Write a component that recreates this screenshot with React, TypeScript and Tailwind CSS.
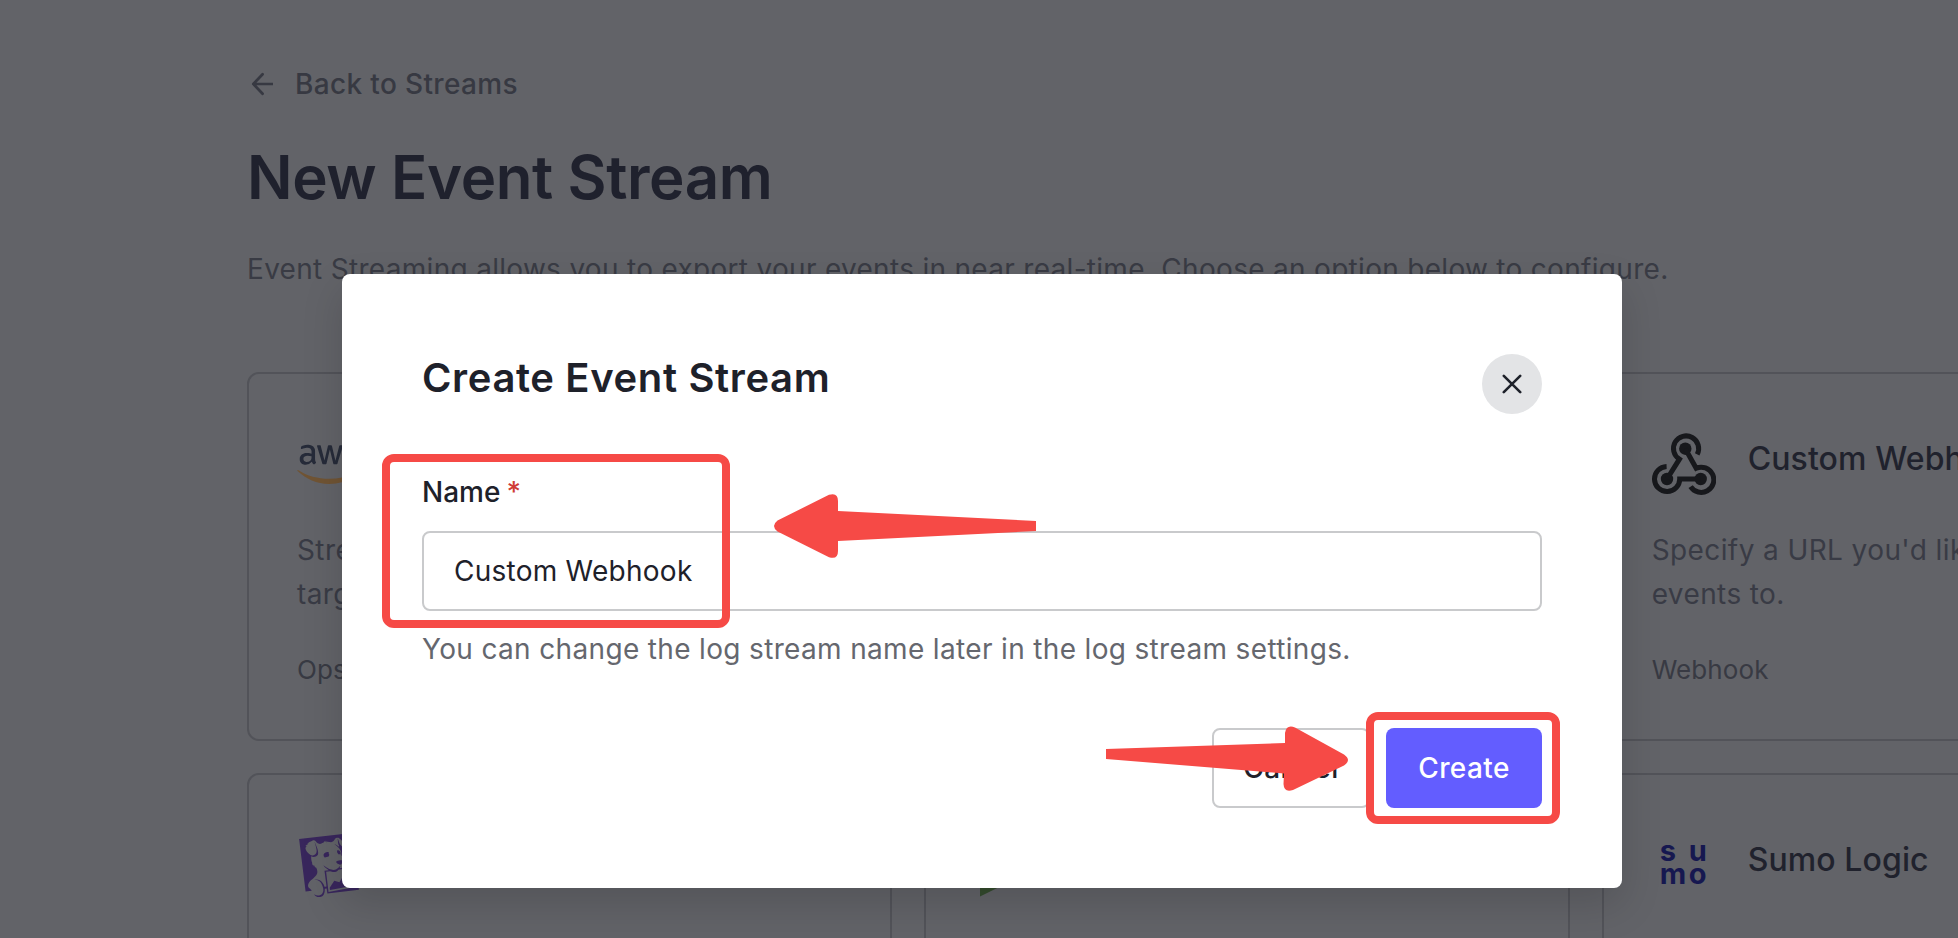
import type { ReactNode } from "react";
import { FaAws } from "react-icons/fa";
import { SiDatadog } from "react-icons/si";

function WebhookLogo() {
  return (
    <svg viewBox="0 0 64 64" className="h-16 w-16 shrink-0" fill="none" stroke="#17181c" strokeWidth="5">
      <circle cx="33.3" cy="16.7" r="6.2" fill="#17181c" stroke="none" />
      <circle cx="15" cy="47" r="6.2" fill="#17181c" stroke="none" />
      <circle cx="48.7" cy="47" r="6.2" fill="#17181c" stroke="none" />
      <path d="M33.3 16.7 44.2 36.2A12.6 12.6 0 1 1 38.600 54.600" />
      <path d="M48.7 47H27.7A12.6 12.6 0 1 1 14.6 34.4" />
      <path d="M15 47 27.4 27.2A12.6 12.6 0 1 1 45.2 22.4" />
    </svg>
  );
}

function AwsLogo() {
  return (
    <span className="grid h-16 w-16 shrink-0 place-items-center">
      <FaAws className="col-start-1 row-start-1 h-16 w-16 text-[#262b39] [clip-path:inset(0_0_48%_0)]" />
      <svg viewBox="0 0 64 64" className="col-start-1 row-start-1 h-16 w-16" fill="#705434">
        <path d="M0 38.500C9 47 20 52 32 52c9 0 19-3 26-8l-1-2C50 45 41 46.800 32 46.800 21 46.800 10 44 1 38z" />
      </svg>
    </span>
  );
}

function SumoLogo() {
  return (
    <span className="grid h-16 w-16 shrink-0 grid-cols-[29px_20px] grid-rows-[23px_23px] content-center pb-[6px] pl-2 text-[29px] leading-[23px] font-bold text-[#161850]">
      <span>s</span>
      <span>u</span>
      <span>m</span>
      <span>o</span>
    </span>
  );
}

function SplunkLogo() {
  return (
    <svg viewBox="0 0 64 64" className="h-16 w-16 shrink-0" fill="#344b2e">
      <path d="M6 0 60 25v12L6 63.5V50L45 31 6 13z" />
    </svg>
  );
}

type CardProps = { logo?: ReactNode; title?: string; lines?: string[]; tag?: string };

function StreamCard({ logo, title, lines = [], tag }: CardProps) {
  return (
    <article className="h-[369px] rounded-xl border-2 border-[#525359] px-12 pt-[58px]">
      <div className="flex h-16 gap-8">
        {logo}
        <h2 className="text-[32px] leading-[54px] font-medium tracking-[0.1px] whitespace-nowrap text-[#20222d]">{title}</h2>
      </div>
      <p className="mt-8 h-[88px] text-[28px] leading-[44px] tracking-[0.4px] whitespace-nowrap text-[#393b45]">
        {lines.map((line) => (
          <span key={line} className="block">
            {line}
          </span>
        ))}
      </p>
      <p className="mt-[34px] text-[26px] leading-10 tracking-[0.1px] text-[#383a43]">{tag}</p>
    </article>
  );
}

export default function App() {
  return (
    <div className="relative h-[938px] w-[1958px] overflow-hidden bg-[#626368] font-['Inter',sans-serif]">
      <main className="flex flex-col pt-[62px] pl-[247px]">
        <a className="flex h-11 items-center gap-[22px] text-[28px] font-medium tracking-[0.35px] text-[#373942]">
          <svg viewBox="0 0 26 26" className="h-[26px] w-[26px]" fill="none" stroke="currentColor" strokeWidth="2.7" strokeLinecap="round" strokeLinejoin="round">
            <path d="M25.500 13H6.300M15.600 3.200 6.300 13l9.300 9.800" />
          </svg>
          Back to Streams
        </a>
        <h1 className="mt-[35px] text-[60px] leading-[72px] font-semibold tracking-[-0.4px] text-[#1f212d]">New Event Stream</h1>
        <p className="mt-[34px] h-11 text-[28px] leading-[44px] tracking-[0.3px] whitespace-nowrap text-[#393b44]">
          Event Streaming allows you to export your events in near real-time. Choose an option below to configure.
        </p>
        <div className="mt-[81px] grid w-[2000px] grid-cols-3 gap-8">
          <StreamCard logo={<AwsLogo />} lines={["Stream", "targets"]} tag="Ops" />
          <StreamCard />
          <StreamCard logo={<WebhookLogo />} title="Custom Webhook" lines={["Specify a URL you'd like", "events to."]} tag="Webhook" />
          <StreamCard logo={<SiDatadog className="h-16 w-16 shrink-0 text-[#38265c]" />} />
          <StreamCard logo={<SplunkLogo />} />
          <StreamCard logo={<SumoLogo />} title="Sumo Logic" />
        </div>
      </main>

      <div className="absolute inset-0 pt-[274px] pl-[342px]">
        <section className="flex h-[614px] w-[1280px] flex-col rounded-lg bg-white px-20 pt-20 shadow-[0_16px_40px_rgba(0,0,0,0.15)]">
          <header className="flex justify-between">
            <h2 className="text-[40px] leading-[48px] font-semibold tracking-[0.63px] text-[#1e212a]">Create Event Stream</h2>
            <button className="grid h-[60px] w-[60px] place-items-center rounded-full bg-[#e3e4e6]">
              <svg viewBox="0 0 20 20" className="h-5 w-5" fill="none" stroke="#1e212a" strokeWidth="2.6" strokeLinecap="round">
                <path d="m1.800 1.800 16.400 16.400M18.200 1.800 1.800 18.200" />
              </svg>
            </button>
          </header>
          <label className="mt-14 flex h-11 gap-[6px] text-[28px] leading-[44px] font-medium text-[#1e212a]">
            Name<span className="text-[#d03c38]">*</span>
          </label>
          <div className="mt-[17px] flex h-20 shrink-0 items-center rounded-lg border-2 border-[#c9cacc] px-[30px] text-[28px] tracking-[0.25px] text-[#1e212a]">
            Custom Webhook
          </div>
          <p className="mt-4 text-[28px] leading-[44px] tracking-[0.34px] text-[#65676e]">
            You can change the log stream name later in the log stream settings.
          </p>
          <footer className="mt-[57px] flex justify-end gap-4 text-[28px] font-medium tracking-[0.4px]">
            <button className="h-20 w-[158px] rounded-lg border-2 border-[#c9cacc] text-[#1e212a]">Cancel</button>
            <button className="h-20 w-[156px] rounded-lg bg-[#635dff] text-white">Create</button>
          </footer>
        </section>
      </div>

      <div className="absolute top-[454px] left-[382px] h-[174px] w-[348px] rounded-xl border-8 border-[#f64a46]" />
      <div className="absolute top-[712px] left-[1366px] h-[112px] w-[194px] rounded-xl border-8 border-[#f64a46]" />
      <svg className="absolute top-0 left-0 h-[938px] w-[1958px]" viewBox="0 0 1958 938" fill="#f64a46">
        <path d="M777.5 520.5 829 494.8Q838 492 838 501V511L1036 521V531L838 541V551Q838 560 829 557.2L777.5 531.5Q770.5 526 777.5 520.5Z" />
        <path d="M1106 749 1285 743V733Q1286.500 724 1295 727.500L1344 754.500Q1352 760 1344 765.500L1293 790Q1284 793 1283.500 784L1284 773.500 1106 759Z" />
      </svg>
    </div>
  );
}
